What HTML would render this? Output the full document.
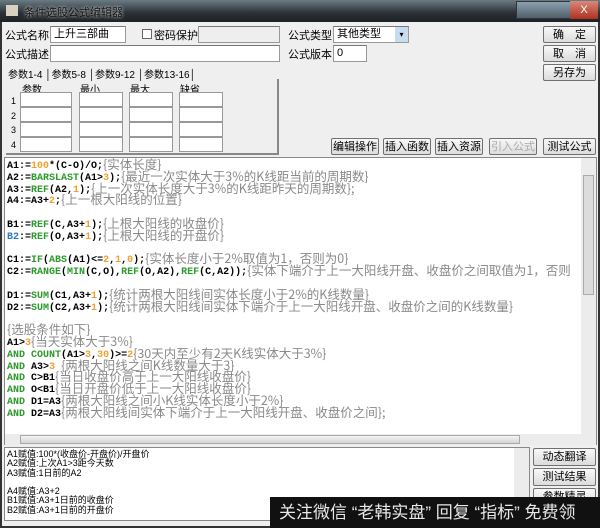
<!DOCTYPE html>
<html><head><meta charset="utf-8"><style>
*{box-sizing:border-box;margin:0;padding:0}
body{width:600px;height:528px;overflow:hidden;background:#2b2b2b;font-family:"Liberation Sans","Noto Sans CJK SC",sans-serif;font-size:11px;color:#000;position:relative}
.a{position:absolute}
.win{left:0;top:0;width:600px;height:528px;background:#efefef;border:2px solid #333}
.title{left:0;top:0;width:600px;height:22px;background:linear-gradient(#6b7b84,#2a3035 60%,#1e2226);color:#fff}
.inp{background:#fff;border:1px solid #999;border-top-color:#777}
.btn{background:linear-gradient(#f8f8f8,#dcdcdc);border:1px solid #707070;border-radius:2px;text-align:center;font-size:11px;line-height:16px}
.code{font-family:"Liberation Mono","Noto Sans CJK SC",monospace;font-size:10px;font-weight:bold}
.code div{height:11.8px;line-height:11.8px;overflow:visible;white-space:pre}
.code i{font-style:normal;font-weight:normal;color:#8a8a8a;font-family:"Noto Sans CJK SC",sans-serif;font-size:12.5px;line-height:10px;position:relative;top:1px}
.y{color:#f0a030}.g{color:#2a9a2a}.b{color:#2a7ac0}
.lab{font-size:11px}
</style></head><body>
<div class="a win"></div>
<div class="a title"><div class="a" style="left:6px;top:5px;width:12px;height:11px;background:#d8d0c0"></div><div class="a" style="left:24px;top:4px;font-size:11px;color:#111;text-shadow:0 0 3px #fff">条件选股公式编辑器</div>
<div class="a" style="left:516px;top:1px;width:82px;height:18px;background:linear-gradient(#8aa0b0,#50606a);border:1px solid #333"></div>
<div class="a" style="left:570px;top:1px;width:28px;height:18px;background:linear-gradient(#d88a7a,#b03020);color:#fff;text-align:center;font-size:11px;line-height:18px">X</div></div>

<div class="a lab" style="left:5px;top:27px">公式名称</div>
<div class="a inp" style="left:50px;top:26px;width:76px;height:17px;padding-left:3px;line-height:15px">上升三部曲</div>
<div class="a" style="left:142px;top:29px;width:10px;height:10px;border:1px solid #666;background:#fff"></div>
<div class="a lab" style="left:154px;top:27px">密码保护</div>
<div class="a inp" style="left:198px;top:26px;width:82px;height:17px;background:#eee"></div>
<div class="a lab" style="left:288px;top:27px">公式类型</div>
<div class="a inp" style="left:333px;top:26px;width:76px;height:17px;padding-left:3px;line-height:15px">其他类型</div>
<div class="a" style="left:395px;top:27px;width:13px;height:15px;background:#c8dcf0;font-size:8px;text-align:center;line-height:15px">▾</div>
<div class="a lab" style="left:5px;top:46px">公式描述</div>
<div class="a inp" style="left:50px;top:45px;width:230px;height:17px"></div>
<div class="a lab" style="left:288px;top:46px">公式版本</div>
<div class="a inp" style="left:333px;top:45px;width:34px;height:17px;padding-left:3px;line-height:15px">0</div>
<div class="a btn" style="left:543px;top:26px;width:53px;height:17px">确　定</div>
<div class="a btn" style="left:543px;top:45px;width:53px;height:17px">取　消</div>
<div class="a btn" style="left:543px;top:64px;width:53px;height:17px">另存为</div>

<div class="a" style="left:8px;top:66px;font-size:10px">参数1-4 │参数5-8 │参数9-12 │参数13-16│</div>
<div class="a" style="left:6px;top:79px;width:273px;height:76px;border-right:2px solid #888;border-bottom:2px solid #888"></div>
<div class="a" style="left:22px;top:81px;font-size:10px">参数</div>
<div class="a" style="left:80px;top:81px;font-size:10px">最小</div>
<div class="a" style="left:130px;top:81px;font-size:10px">最大</div>
<div class="a" style="left:180px;top:81px;font-size:10px">缺省</div>
<div class="a" style="left:11px;top:94px;font-size:9px;line-height:14.5px">1<br>2<br>3<br>4</div>
<div class="a" style="left:20px;top:92px;width:52px;height:60px;background:repeating-linear-gradient(#fff 0 13px,#999 13px 15px);border:1px solid #999"></div>
<div class="a" style="left:79px;top:92px;width:44px;height:60px;background:repeating-linear-gradient(#fff 0 13px,#999 13px 15px);border:1px solid #999"></div>
<div class="a" style="left:129px;top:92px;width:44px;height:60px;background:repeating-linear-gradient(#fff 0 13px,#999 13px 15px);border:1px solid #999"></div>
<div class="a" style="left:179px;top:92px;width:44px;height:60px;background:repeating-linear-gradient(#fff 0 13px,#999 13px 15px);border:1px solid #999"></div>

<div class="a btn" style="left:331px;top:138px;width:48px;height:17px">编辑操作</div>
<div class="a btn" style="left:383px;top:138px;width:48px;height:17px">插入函数</div>
<div class="a btn" style="left:435px;top:138px;width:48px;height:17px">插入资源</div>
<div class="a btn" style="left:489px;top:138px;width:48px;height:17px;color:#aaa">引入公式</div>
<div class="a btn" style="left:543px;top:138px;width:53px;height:17px">测试公式</div>

<div class="a" style="left:4px;top:157px;width:593px;height:288px;background:#fff;border:1px solid #888"></div>
<div class="a" style="left:581px;top:158px;width:15px;height:276px;background:#ececec"></div>
<div class="a" style="left:583px;top:175px;width:11px;height:120px;background:#dcdcdc;border:1px solid #aaa"></div>

<div class="a code" style="left:7px;top:158px;width:574px;height:274px;overflow:hidden"><div>A1:=<span class="y">100</span>*(C-O)/O;<i>{实体长度}</i></div><div>A2:=<span class="g">BARSLAST</span>(A1&gt;<span class="y">3</span>);<i>{最近一次实体大于3%的K线距当前的周期数}</i></div><div>A3:=<span class="g">REF</span>(A2,<span class="y">1</span>);<i>{上一次实体长度大于3%的K线距昨天的周期数};</i></div><div>A4:=A3+<span class="y">2</span>;<i>{上一根大阳线的位置}</i></div><div></div><div>B1:=<span class="g">REF</span>(C,A3+<span class="y">1</span>);<i>{上根大阳线的收盘价}</i></div><div><span class="b">B2</span>:=<span class="g">REF</span>(O,A3+<span class="y">1</span>);<i>{上根大阳线的开盘价}</i></div><div></div><div>C1:=<span class="g">IF</span>(<span class="g">ABS</span>(A1)&lt;=<span class="y">2</span>,<span class="y">1</span>,<span class="y">0</span>);<i>{实体长度小于2%取值为1，否则为0}</i></div><div>C2:=<span class="g">RANGE</span>(<span class="g">MIN</span>(C,O),<span class="g">REF</span>(O,A2),<span class="g">REF</span>(C,A2));<i>{实体下端介于上一大阳线开盘、收盘价之间取值为1，否则</i></div><div></div><div>D1:=<span class="g">SUM</span>(C1,A3+<span class="y">1</span>);<i>{统计两根大阳线间实体长度小于2%的K线数量}</i></div><div>D2:=<span class="g">SUM</span>(C2,A3+<span class="y">1</span>);<i>{统计两根大阳线间实体下端介于上一大阳线开盘、收盘价之间的K线数量}</i></div><div></div><div><i>{选股条件如下}</i></div><div>A1&gt;<span class="y">3</span><i>{当天实体大于3%}</i></div><div><span class="g">AND COUNT</span>(A1&gt;<span class="y">3</span>,<span class="y">30</span>)&gt;=<span class="y">2</span><i>{30天内至少有2天K线实体大于3%}</i></div><div><span class="g">AND</span> A3&gt;<span class="y">3</span> <i>{两根大阳线之间K线数量大于3}</i></div><div><span class="g">AND</span> C&gt;B1<i>{当日收盘价高于上一大阳线收盘价}</i></div><div><span class="g">AND</span> O&lt;B1<i>{当日开盘价低于上一大阳线收盘价}</i></div><div><span class="g">AND</span> D1=A3<i>{两根大阳线之间小K线实体长度小于2%}</i></div><div><span class="g">AND</span> D2=A3<i>{两根大阳线间实体下端介于上一大阳线开盘、收盘价之间};</i></div></div>

<div class="a" style="left:5px;top:434px;width:591px;height:11px;background:#ececec"></div>
<div class="a" style="left:20px;top:435px;width:500px;height:9px;background:linear-gradient(#f4f4f4,#d4d4d4);border:1px solid #aaa"></div>

<div class="a" style="left:4px;top:447px;width:526px;height:74px;background:#fff;border:1px solid #888"></div>
<div class="a" style="left:514px;top:448px;width:15px;height:72px;background:#ececec"></div>
<div class="a" style="left:7px;top:450px;font-size:9px;line-height:9.3px;font-family:'Liberation Sans','Noto Sans CJK SC',sans-serif">A1赋值:100*(收盘价-开盘价)/开盘价<br>A2赋值:上次A1&gt;3距今天数<br>A3赋值:1日前的A2<br><br>A4赋值:A3+2<br>B1赋值:A3+1日前的收盘价<br>B2赋值:A3+1日前的开盘价</div>
<div class="a btn" style="left:533px;top:448px;width:63px;height:18px;line-height:17px">动态翻译</div>
<div class="a btn" style="left:533px;top:468px;width:63px;height:18px;line-height:17px">测试结果</div>
<div class="a btn" style="left:533px;top:488px;width:63px;height:18px;line-height:17px">参数精灵</div>
<div class="a" style="left:270px;top:497px;width:330px;height:31px;background:#111;color:#e8e8e8;font-size:17px;line-height:31px;padding-left:9px;white-space:nowrap;overflow:hidden">关注微信 “老韩实盘” 回复 “指标” 免费领</div>
</body></html>
